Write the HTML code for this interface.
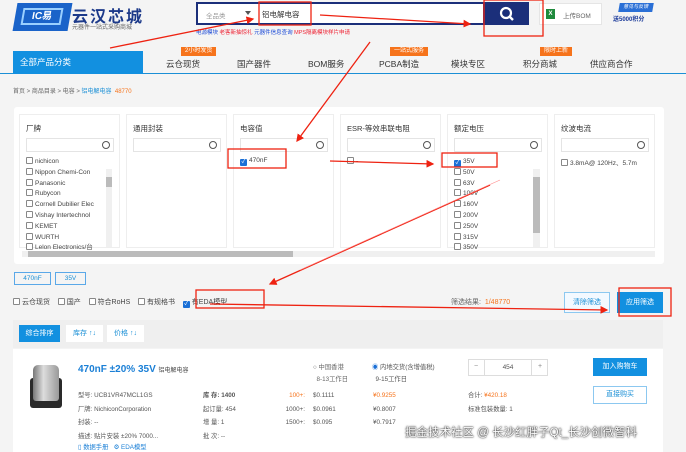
<!DOCTYPE html><html><head><meta charset="utf-8"><style>
*{margin:0;padding:0;box-sizing:border-box}
body{width:686px;height:452px;overflow:hidden;background:#f4f4f4;font-family:"Liberation Sans","Noto Sans CJK SC",sans-serif;position:relative;font-size:7px;color:#333}
.a{position:absolute}
.cb{display:inline-block;width:7px;height:7px;border:1px solid #888;background:#fff;vertical-align:-1px;margin-right:2px;border-radius:1px}
.ck{display:inline-block;width:7px;height:7px;background:#1a6fd6;vertical-align:-1px;margin-right:2px;border-radius:1px;color:#fff;font-size:6px;line-height:7px;text-align:center}
.col{position:absolute;top:114px;width:101px;height:134px;background:#fff;border:1px solid #eee}
.col h4{font-size:7.5px;font-weight:normal;color:#333;position:absolute;left:6px;top:8px}
.sb{position:absolute;left:6px;top:23px;width:88px;height:14px;border:1px solid #e4e4e4}
.sb:after{content:"";position:absolute;right:3px;top:2px;width:6px;height:6px;border:1px solid #555;border-radius:50%}
.li{position:absolute;left:6px;font-size:6.5px;color:#444;white-space:nowrap}
.nav span{position:absolute;top:58px;font-size:8.5px;color:#333}
.tag{position:absolute;background:#f6731b;color:#fff;font-size:6px;padding:0 4px;height:9px;line-height:9px}
</style></head><body>
<!-- header -->
<div class="a" style="left:15px;top:3px;width:55px;height:28px;background:#1a63c9;transform:skewX(-10deg)"></div>
<div class="a" style="left:22px;top:8px;width:40px;height:17px;border:2px solid #9ad0ff;color:#fff;font-size:10px;font-weight:bold;line-height:13px;text-align:center;transform:skewX(-10deg)">IC易</div>
<div class="a" style="left:72px;top:3px;font-size:16px;font-weight:bold;color:#1d3a8a;letter-spacing:2px">云汉芯城</div>
<div class="a" style="left:72px;top:22px;font-size:6px;color:#666">元器件一站式采购商城</div>
<div class="a" style="left:196px;top:2px;width:289px;height:23px;border:2px solid #1b2f7a;background:#fff"></div>
<div class="a" style="left:206px;top:10px;font-size:6.5px;color:#999">全品类</div>
<div class="a" style="left:245px;top:11px;border:3px solid transparent;border-top:4px solid #555"></div>
<div class="a" style="left:262px;top:9px;font-size:7.5px;color:#333">铝电解电容</div>
<div class="a" style="left:485px;top:2px;width:44px;height:23px;background:#1b2f7a"></div>
<svg class="a" style="left:498px;top:5px" width="18" height="18"><circle cx="8" cy="8" r="5" stroke="#fff" stroke-width="2.2" fill="none"/><line x1="11.5" y1="11.5" x2="15" y2="15" stroke="#fff" stroke-width="2.4"/></svg>
<div class="a" style="left:539px;top:3px;width:63px;height:22px;background:#fff;border:1px solid #e5e5e5"></div>
<div class="a" style="left:546px;top:9px;width:9px;height:10px;background:#1f8a3c;color:#fff;font-size:6px;font-weight:bold;text-align:center;line-height:10px">X</div>
<div class="a" style="left:563px;top:10px;font-size:6.5px;color:#666">上传BOM</div>
<div class="a" style="left:619px;top:3px;width:34px;height:9px;background:#2a6fd6;color:#fff;font-size:5px;text-align:center;line-height:9px;transform:skewX(-10deg)">意见与反馈</div>
<div class="a" style="left:613px;top:14px;font-size:6px;color:#1b3a9a;font-weight:bold">送5000积分</div>
<div class="a" style="left:196px;top:28px;font-size:5.5px;color:#1a49d6;white-space:nowrap">电源模块 <span style="color:#e23">老客新抽惊礼</span> 元器件信息查询 <span style="color:#e23">MPS隔离模块样片申请</span></div>
<!-- nav -->
<div class="a" style="left:0;top:73px;width:686px;height:1px;background:#1b8fd6"></div>
<div class="a" style="left:13px;top:51px;width:130px;height:23px;background:#1290e0;color:#fff;font-size:8.5px;line-height:23px;padding-left:7px">全部产品分类</div>
<div class="nav"><span style="left:166px">云仓现货</span><span style="left:237px">国产器件</span><span style="left:308px">BOM服务</span><span style="left:379px">PCBA制造</span><span style="left:451px">模块专区</span><span style="left:523px">积分商城</span><span style="left:590px">供应商合作</span></div>
<div class="tag" style="left:181px;top:47px">2小时发货</div>
<div class="tag" style="left:390px;top:47px">一站式服务</div>
<div class="tag" style="left:540px;top:47px">限时上新</div>
<div class="a" style="left:13px;top:86px;font-size:6px;color:#666;white-space:nowrap">首页 &gt; 商品目录 &gt; 电容 &gt; <span style="color:#1a8fd6">铝电解电容</span> &nbsp;<span style="color:#f6731b">48770</span></div>
<!-- filter panel -->
<div class="a" style="left:14px;top:107px;width:650px;height:157px;background:#fff;border-radius:3px"></div>
<div class="col" style="left:19px"><h4>厂牌</h4><div class="sb"></div>
<div class="li" style="top:42px;line-height:10.8px"><span class="cb"></span>nichicon<br><span class="cb"></span>Nippon Chemi-Con<br><span class="cb"></span>Panasonic<br><span class="cb"></span>Rubycon<br><span class="cb"></span>Cornell Dubilier Elec<br><span class="cb"></span>Vishay Intertechnol<br><span class="cb"></span>KEMET<br><span class="cb"></span>WURTH<br><span class="cb"></span>Lelon Electronics/台</div>
<div class="a" style="left:86px;top:54px;width:6px;height:78px;background:#f0f0f0"></div><div class="a" style="left:86px;top:62px;width:6px;height:10px;background:#bbb"></div></div>
<div class="col" style="left:126px"><h4>通用封装</h4><div class="sb"></div></div>
<div class="col" style="left:233px"><h4>电容值</h4><div class="sb"></div><div class="li" style="top:42px"><span class="ck">✓</span>470nF</div></div>
<div class="col" style="left:340px"><h4>ESR-等效串联电阻</h4><div class="sb"></div><div class="li" style="top:42px"><span class="cb"></span>-</div></div>
<div class="col" style="left:447px"><h4>额定电压</h4><div class="sb"></div>
<div class="li" style="top:42px;line-height:10.8px"><span class="ck">✓</span>35V<br><span class="cb"></span>50V<br><span class="cb"></span>63V<br><span class="cb"></span>100V<br><span class="cb"></span>160V<br><span class="cb"></span>200V<br><span class="cb"></span>250V<br><span class="cb"></span>315V<br><span class="cb"></span>350V</div>
<div class="a" style="left:85px;top:54px;width:7px;height:78px;background:#f0f0f0"></div><div class="a" style="left:85px;top:62px;width:7px;height:56px;background:#bbb"></div></div>
<div class="col" style="left:554px"><h4>纹波电流</h4><div class="sb"></div><div class="li" style="top:42px"><span class="cb"></span>3.8mA@ 120Hz、5.7m</div></div>
<div class="a" style="left:22px;top:251px;width:633px;height:6px;background:#f0f0f0"></div>
<div class="a" style="left:28px;top:251px;width:265px;height:6px;background:#bbb"></div>
<!-- tags -->
<div class="a" style="left:14px;top:272px;width:37px;height:13px;border:1px solid #5aa8e8;color:#1a8fd6;font-size:6.5px;text-align:center;line-height:11px">470nF</div>
<div class="a" style="left:55px;top:272px;width:31px;height:13px;border:1px solid #5aa8e8;color:#1a8fd6;font-size:6.5px;text-align:center;line-height:11px">35V</div>
<div class="a" style="left:13px;top:297px;font-size:7px;color:#444;white-space:nowrap"><span class="cb"></span>云仓现货 &nbsp; &nbsp;<span class="cb"></span>国产 &nbsp; &nbsp;<span class="cb"></span>符合RoHS &nbsp; &nbsp;<span class="cb"></span>有规格书 &nbsp; &nbsp;<span class="ck">✓</span>有EDA模型</div>
<div class="a" style="left:451px;top:297px;font-size:7px;color:#666">筛选结果: <span style="color:#f6731b">&nbsp;1/48770</span></div>
<div class="a" style="left:564px;top:292px;width:46px;height:21px;border:1px solid #8cc8f0;background:#f3f9ff;color:#1a8fd6;font-size:7px;text-align:center;line-height:19px">清除筛选</div>
<div class="a" style="left:617px;top:292px;width:46px;height:21px;background:#1290e0;color:#fff;font-size:7px;text-align:center;line-height:21px">应用筛选</div>
<!-- sort -->
<div class="a" style="left:13px;top:320px;width:650px;height:28px;background:#efefef"></div>
<div class="a" style="left:19px;top:325px;width:41px;height:17px;background:#1290e0;color:#fff;font-size:7px;text-align:center;line-height:17px">综合排序</div>
<div class="a" style="left:66px;top:325px;width:37px;height:17px;background:#fff;color:#1a8fd6;font-size:7px;text-align:center;line-height:17px">库存 ↑↓</div>
<div class="a" style="left:107px;top:325px;width:37px;height:17px;background:#fff;color:#1a8fd6;font-size:7px;text-align:center;line-height:17px">价格 ↑↓</div>
<!-- product -->
<div class="a" style="left:13px;top:349px;width:650px;height:103px;background:#fff"></div>
<div class="a" style="left:30px;top:378px;width:32px;height:30px;background:#2a2a2a;border-radius:3px"></div>
<div class="a" style="left:33px;top:365px;width:26px;height:36px;background:linear-gradient(90deg,#777,#ddd 40%,#999);border-radius:5px 5px 3px 3px"></div>
<div class="a" style="left:78px;top:364px;font-size:10px;font-weight:bold;color:#1a7fd6;white-space:nowrap">470nF ±20% 35V <span style="font-size:6px;color:#444;font-weight:normal">铝电解电容</span></div>
<div class="a" style="left:78px;top:389px;font-size:6.3px;color:#555;line-height:13.5px;white-space:nowrap">型号: UCB1VR47MCL1GS<br>厂牌: NichiconCorporation<br>封装: --<br>描述: 贴片安装 ±20% 7000...</div>
<div class="a" style="left:78px;top:442px;font-size:6.3px;color:#1a7fd6">▯ 数据手册 &nbsp; ⚙ EDA模型</div>
<div class="a" style="left:203px;top:389px;font-size:6.3px;color:#555;line-height:13.5px;white-space:nowrap"><b>库 存: 1400</b><br>起订量: 454<br>增 量: 1<br>批 次: --</div>
<div class="a" style="left:283px;top:389px;font-size:6.3px;color:#555;line-height:13.5px;text-align:right;width:22px;white-space:nowrap"><span style="color:#f6731b">100+:</span><br>1000+:<br>1500+:</div>
<div class="a" style="left:313px;top:389px;font-size:6.3px;color:#555;line-height:13.5px">$0.1111<br>$0.0961<br>$0.095</div>
<div class="a" style="left:313px;top:362px;font-size:6.3px;color:#666;line-height:12px;white-space:nowrap">○ 中国香港<br>&nbsp; 8-13工作日</div>
<div class="a" style="left:372px;top:362px;font-size:6.3px;color:#555;line-height:12px;white-space:nowrap"><span style="color:#1a6fd6">◉</span> 内地交货(含增值税)<br>&nbsp; 9-15工作日</div>
<div class="a" style="left:373px;top:389px;font-size:6.3px;color:#555;line-height:13.5px"><span style="color:#f6731b">¥0.9255</span><br>¥0.8007<br>¥0.7917</div>
<div class="a" style="left:468px;top:359px;width:80px;height:17px;border:1px solid #ddd;font-size:6.5px;color:#555;line-height:15px;text-align:center">454</div>
<div class="a" style="left:468px;top:359px;width:17px;height:17px;border-right:1px solid #ddd;text-align:center;line-height:15px;color:#888">−</div>
<div class="a" style="left:531px;top:359px;width:17px;height:17px;border-left:1px solid #ddd;text-align:center;line-height:15px;color:#888">+</div>
<div class="a" style="left:468px;top:389px;font-size:6.3px;color:#555;line-height:13.5px">合计: <span style="color:#f6731b">¥420.18</span><br>标准包装数量: 1</div>
<div class="a" style="left:593px;top:358px;width:54px;height:18px;background:#1290e0;color:#fff;font-size:7px;text-align:center;line-height:18px">加入购物车</div>
<div class="a" style="left:593px;top:386px;width:54px;height:18px;border:1px solid #8cc8f0;color:#1a8fd6;font-size:7px;text-align:center;line-height:16px">直接购买</div>
<div class="a" style="left:405px;top:424px;font-size:11.5px;color:#fff;text-shadow:0 0 2px #333,0 0 1px #000;white-space:nowrap">掘金技术社区 @ 长沙红胖子Qt_长沙创微智科</div>
<!-- annotations -->
<svg class="a" style="left:0;top:0" width="686" height="452">
<defs><marker id="m" markerWidth="6" markerHeight="6" refX="5" refY="3" orient="auto"><path d="M0,0 L6,3 L0,6z" fill="#e21"/></marker></defs>
<g fill="none" stroke="#e21" stroke-width="1.3">
<rect x="259" y="2" width="52" height="23"/><rect x="484" y="0" width="59" height="36"/>
<rect x="228" y="149" width="58" height="19"/><rect x="442" y="153" width="55" height="14"/>
<rect x="196" y="290" width="68" height="18"/><rect x="619" y="288" width="52" height="28"/>
<line x1="110" y1="48" x2="253" y2="19" marker-end="url(#m)"/>
<line x1="320" y1="15" x2="470" y2="24" marker-end="url(#m)"/>
<line x1="370" y1="42" x2="297" y2="141" marker-end="url(#m)"/>
<line x1="330" y1="161" x2="433" y2="164" marker-end="url(#m)"/>
<line x1="490" y1="185" x2="270" y2="284" marker-end="url(#m)"/>
<line x1="210" y1="304" x2="607" y2="310" marker-end="url(#m)"/>
</g><line x1="500" y1="180" x2="300" y2="270" stroke="#f88" stroke-width="0.6"/></svg>
</body></html>
